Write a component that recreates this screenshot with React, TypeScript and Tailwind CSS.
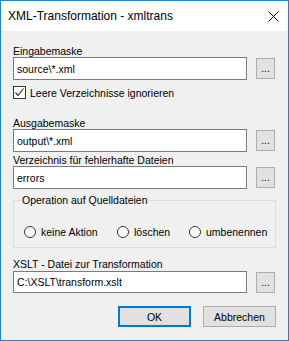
import type { ReactNode } from 'react';

// Eingabefeld mit "..."-Knopf daneben
function PathRow({ value, inputClass = 'h-[23px]' }: { value: string; inputClass?: string }) {
  return (
    <div className="flex items-start">
      <div
        className={`w-[234px] ${inputClass} border border-[#7a7a7a] bg-white pl-[3px] flex items-center text-[10.5px] leading-[12px]`}
      >
        {value}
      </div>
      <button className="ml-[9px] mt-[1px] w-[19px] h-[21px] border border-[#adadad] bg-[#e1e1e1] flex items-end justify-center pb-[4px] text-[10px] leading-[10px]">
        ...
      </button>
    </div>
  );
}

function Label({ children, className = '' }: { children: ReactNode; className?: string }) {
  return <div className={`h-[12px] text-[10.5px] leading-[12px] ${className}`}>{children}</div>;
}

function Radio({ label, className }: { label: string; className: string }) {
  return (
    <div className={`flex items-center ${className}`}>
      <span className="w-[12px] h-[12px] rounded-full border border-[#333333] bg-white" />
      <span className="ml-[5px] text-[10.5px] leading-[12px]">{label}</span>
    </div>
  );
}

export default function App() {
  return (
    <div className="w-[289px] h-[341px] border border-[#1883d7] flex flex-col font-['Liberation_Sans',Arial,sans-serif] text-black">
      {/* Titelleiste */}
      <div className="h-[30px] bg-white flex items-center justify-between pl-[7px] pr-[9px]">
        <span className="text-[12px] leading-[14px]">XML-Transformation - xmltrans</span>
        <svg width="11" height="11" viewBox="0 0 11 11">
          <path d="M0.5 0.5 L10.5 10.5 M10.5 0.5 L0.5 10.5" stroke="#000" strokeWidth="1" />
        </svg>
      </div>

      {/* Dialoginhalt */}
      <div className="flex-1 bg-[#f0f0f0] pl-[12px] pr-[12px] pt-[14px] flex flex-col">
        <Label>Eingabemaske</Label>
        <PathRow value="source\*.xml" />

        <div className="mt-[6px] flex items-center h-[13px]">
          <span className="w-[13px] h-[13px] border border-[#333333] bg-white flex items-center justify-center">
            <svg width="11" height="11" viewBox="0 0 11 11">
              <path d="M1.5 5.5 L4 8.5 L9.5 1.5" stroke="#333" strokeWidth="1.2" fill="none" />
            </svg>
          </span>
          <span className="ml-[4px] text-[10.5px] leading-[12px]">Leere Verzeichnisse ignorieren</span>
        </div>

        <Label className="mt-[18px]">Ausgabemaske</Label>
        <PathRow value="output\*.xml" />

        <Label className="mt-[2px]">Verzeichnis für fehlerhafte Dateien</Label>
        <PathRow value="errors" />

        <fieldset className="mt-[5px] w-[263px] h-[54px] border border-[#dcdcdc]">
          <legend className="ml-[7px] px-[1px] text-[10.5px] leading-[12px]">Operation auf Quelldateien</legend>
          <div className="flex pl-[10px] mt-[20px]">
            <Radio label="keine Aktion" className="w-[93px]" />
            <Radio label="löschen" className="w-[72px]" />
            <Radio label="umbenennen" className="" />
          </div>
        </fieldset>

        <Label className="mt-[10px]">XSLT - Datei zur Transformation</Label>
        <div className="mt-[1px]">
          <PathRow value="C:\XSLT\transform.xslt" inputClass="h-[22px]" />
        </div>

        <div className="mt-[13px] flex justify-end gap-[12px]">
          <button className="w-[73px] h-[21px] border-2 border-[#0078d7] bg-[#e1e1e1] text-[10.5px] leading-[12px]">
            OK
          </button>
          <button className="w-[73px] h-[21px] border border-[#adadad] bg-[#e1e1e1] text-[10.5px] leading-[12px]">
            Abbrechen
          </button>
        </div>
      </div>
    </div>
  );
}
